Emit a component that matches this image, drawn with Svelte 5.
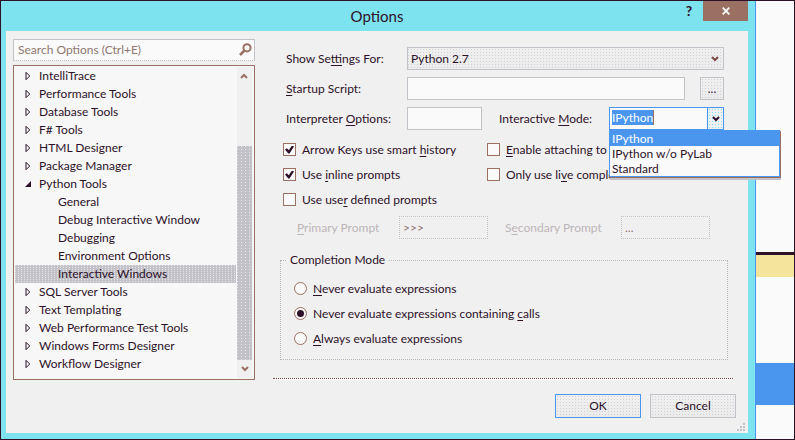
<script>
  const nodes = [
    { label: 'IntelliTrace' },
    { label: 'Performance Tools' },
    { label: 'Database Tools' },
    { label: 'F# Tools' },
    { label: 'HTML Designer' },
    { label: 'Package Manager' },
    {
      label: 'Python Tools',
      children: [
        'General',
        'Debug Interactive Window',
        'Debugging',
        'Environment Options',
        'Interactive Windows'
      ]
    },
    { label: 'SQL Server Tools' },
    { label: 'Text Templating' },
    { label: 'Web Performance Test Tools' },
    { label: 'Windows Forms Designer' },
    { label: 'Workflow Designer' }
  ];
  const modes = ['IPython', 'IPython w/o PyLab', 'Standard'];

  let page = $state('Interactive Windows');
  let mode = $state('IPython');
  let open = $state(true);
  let smartHistory = $state(true);
  let inlinePrompts = $state(true);
  let userPrompts = $state(false);
  let attach = $state(false);
  let liveOnly = $state(false);
  let completion = $state('no-calls');
  let primary = $state('>>>');
  let secondary = $state('...');

  function pick(value) {
    mode = value;
    open = false;
  }
</script>

{#snippet chevron()}
  <svg class="chevron" width="8" height="6" viewBox="0 0 8 6" aria-hidden="true">
    <path d="M1 1 L4 4 L7 1" fill="none" stroke="currentColor" stroke-width="2" />
  </svg>
{/snippet}

<div class="screen">
  <main class="dialog">
    <header>
      <h1>Options</h1>
      <div class="caption">
        <button class="help" aria-label="Help">?</button>
        <button class="close" aria-label="Close">
          <svg width="8" height="8" viewBox="0 0 8 8" aria-hidden="true">
            <path d="M0.7 0.7 L7.3 7.3 M7.3 0.7 L0.7 7.3" stroke="#fff" stroke-width="1.8" />
          </svg>
        </button>
      </div>
    </header>

    <div class="body">
      <aside>
        <div class="search">
          <input type="text" placeholder="Search Options (Ctrl+E)" aria-label="Search Options" />
          <svg width="13" height="13" viewBox="0 0 13 13" aria-hidden="true">
            <circle cx="8" cy="4.8" r="3.6" fill="none" stroke="#9a7063" stroke-width="2" />
            <path d="M5.4 7.6 L1 12" stroke="#9a7063" stroke-width="2.6" />
          </svg>
        </div>
        <div class="tree">
          <ul role="tree" aria-label="Option pages">
            {#each nodes as node}
              <li role="treeitem" aria-selected="false" aria-expanded={!!node.children}>
                <div class="node">
                  <svg width="6" height="10" viewBox="0 0 6 10" aria-hidden="true">
                    {#if node.children}
                      <path d="M6 2 L6 8 L0 8 Z" fill="#2d1129" />
                    {:else}
                      <path d="M1 1.3 L4.7 5 L1 8.7 Z" fill="none" stroke="#2d1129" />
                    {/if}
                  </svg>
                  {node.label}
                </div>
                {#if node.children}
                  <ul role="group">
                    {#each node.children as child}
                      <li role="treeitem" aria-selected={page === child}>
                        <button class="leaf" class:selected={page === child} onclick={() => (page = child)}>
                          {child}
                        </button>
                      </li>
                    {/each}
                  </ul>
                {/if}
              </li>
            {/each}
          </ul>
          <div class="scroll">
            <button class="up" aria-label="Scroll up">{@render chevron()}</button>
            <div class="track"><div class="thumb"></div></div>
            <button aria-label="Scroll down">{@render chevron()}</button>
          </div>
        </div>
      </aside>

      <form onsubmit={(e) => e.preventDefault()}>
        <div class="rows">
          <div class="row">
            <label class="name" for="settings">Show Se<u>t</u>tings For:</label>
            <div class="select">
              <select id="settings"><option>Python 2.7</option></select>
              {@render chevron()}
            </div>
          </div>
          <div class="row">
            <label class="name" for="script"><u>S</u>tartup Script:</label>
            <input class="box grow" id="script" type="text" />
            <button type="button" class="face browse" aria-label="Browse">...</button>
          </div>
          <div class="row">
            <label class="name" for="interp">Interpreter <u>O</u>ptions:</label>
            <input class="box short" id="interp" type="text" />
            <label class="mode-name" for="mode">Interactive <u>M</u>ode:</label>
            <div class="combo">
              <div class="combo-text">
                <input id="mode" type="text" role="combobox" aria-expanded={open} aria-controls="modes" size="6" bind:value={mode} />
              </div>
              <button type="button" aria-label="Show modes" onclick={() => (open = !open)}>{@render chevron()}</button>
              {#if open}
                <ul class="menu" id="modes" role="listbox">
                  {#each modes as item}
                    <li role="option" aria-selected={item === mode}>
                      <button type="button" class:current={item === mode} onclick={() => pick(item)}>{item}</button>
                    </li>
                  {/each}
                </ul>
              {/if}
            </div>
          </div>
        </div>

        <div class="checks">
          <label><input type="checkbox" bind:checked={smartHistory} /><span>Arrow Keys use smart <u>h</u>istory</span></label>
          <label><input type="checkbox" bind:checked={attach} /><span><u>E</u>nable attaching to</span></label>
          <label><input type="checkbox" bind:checked={inlinePrompts} /><span>Use <u>i</u>nline prompts</span></label>
          <label><input type="checkbox" bind:checked={liveOnly} /><span>Only use li<u>v</u>e completions</span></label>
          <label><input type="checkbox" bind:checked={userPrompts} /><span>Use use<u>r</u> defined prompts</span></label>
        </div>

        <div class="prompts">
          <label for="primary"><u>P</u>rimary Prompt</label>
          <input id="primary" type="text" disabled={!userPrompts} bind:value={primary} />
          <label for="secondary">S<u>e</u>condary Prompt</label>
          <input id="secondary" type="text" disabled={!userPrompts} bind:value={secondary} />
        </div>

        <fieldset>
          <legend>Completion Mode</legend>
          <label><input type="radio" value="never" bind:group={completion} /><span><u>N</u>ever evaluate expressions</span></label>
          <label><input type="radio" value="no-calls" bind:group={completion} /><span>Never evaluate expressions containing <u>c</u>alls</span></label>
          <label><input type="radio" value="always" bind:group={completion} /><span><u>A</u>lways evaluate expressions</span></label>
        </fieldset>

        <hr />

        <footer>
          <button type="submit" class="face primary">OK</button>
          <button type="button" class="face">Cancel</button>
        </footer>
      </form>

      <svg class="grip" width="8" height="8" viewBox="0 0 8 8" aria-hidden="true">
        <path d="M6 0h2v2h-2z M3 3h2v2h-2z M6 3h2v2h-2z M0 6h2v2h-2z M3 6h2v2h-2z M6 6h2v2h-2z" fill="#c2c2c8" />
      </svg>
    </div>
  </main>

  <div class="behind" aria-hidden="true">
    <div class="note"></div>
    <div class="bar"></div>
  </div>
</div>

<style>
  .screen {
    --ink: #2d1129;
    --cyan: #7de3ee;
    --blue: #4a96ef;
    --grey: #c2c2c8;
    --brown: #9a7063;
    --paper: #fafafa;
    --face: #f0f0f0;
    box-sizing: border-box;
    min-height: 100vh;
    display: flex;
    border: 1px solid var(--ink);
    background: var(--paper);
    color: var(--ink);
    font: 12px/18px Lato, 'Open Sans', sans-serif;
  }
  .screen :global(*) {
    box-sizing: border-box;
  }
  button, input, select {
    font: inherit;
    color: inherit;
    margin: 0;
    padding: 0;
    border: 0;
    border-radius: 0;
    background: none;
    outline: none;
  }
  ul {
    list-style: none;
    margin: 0;
    padding: 0;
  }
  u {
    text-underline-offset: 2px;
    text-decoration-skip-ink: none;
  }

  .dialog {
    flex: 1;
    display: flex;
    flex-direction: column;
    background: var(--cyan);
    border-right: 1px solid var(--blue);
    padding: 0 7px 6px 5px;
  }
  header {
    height: 30px;
    display: grid;
    grid-template-columns: 1fr auto 1fr;
    align-items: start;
  }
  h1 {
    grid-column: 2;
    margin: 0;
    font-size: 15px;
    line-height: 30px;
    font-weight: 400;
  }
  .caption {
    display: flex;
    justify-content: flex-end;
    gap: 10px;
  }
  .help {
    width: 8px;
    font-size: 14px;
    line-height: 20px;
    font-weight: 700;
  }
  .close {
    width: 45px;
    height: 20px;
    background: var(--brown);
    display: flex;
    align-items: center;
    justify-content: center;
  }

  .body {
    flex: 1;
    position: relative;
    display: flex;
    align-items: flex-start;
    gap: 18px;
    background: var(--face);
    padding: 8px 12px 15px 7px;
  }
  aside {
    width: 242px;
    flex: none;
    display: flex;
    flex-direction: column;
    gap: 4px;
  }
  .search {
    height: 22px;
    display: flex;
    align-items: center;
    gap: 4px;
    padding: 0 2px 0 4px;
    border: 1px solid var(--grey);
    border-bottom-style: dotted;
    background: var(--paper);
  }
  .search svg {
    flex: none;
    margin-bottom: 2px;
  }
  .search input {
    flex: 1;
    min-width: 0;
  }
  .search input::placeholder {
    color: #8f7770;
    opacity: 1;
  }
  .tree {
    display: flex;
    border: 1px solid var(--brown);
    background: #f7f7f7;
    height: 315px;
    padding: 1px 2px 1px 1px;
  }
  .tree > ul {
    flex: 1;
  }
  .node {
    display: flex;
    align-items: center;
    gap: 8px;
    height: 18px;
    padding-left: 10px;
  }
  .leaf {
    display: block;
    width: 100%;
    height: 18px;
    padding-left: 43px;
    text-align: left;
  }
  .selected {
    background: conic-gradient(from 270deg at 1px 1px, #e6e6e8 90deg, var(--grey) 0) 0 0 / 3px 2px;
  }
  .scroll {
    width: 15px;
    margin-left: 1px;
    display: flex;
    flex-direction: column;
    background: var(--face);
  }
  .scroll button {
    height: 18px;
    display: flex;
    align-items: center;
    justify-content: center;
    color: var(--brown);
  }
  .up {
    transform: rotate(180deg);
  }
  .track {
    flex: 1;
    display: flex;
    flex-direction: column;
    justify-content: flex-end;
  }
  .thumb {
    height: 78%;
    background: conic-gradient(from 270deg at 1px 1px, #e6e6e8 90deg, var(--grey) 0) 0 0 / 4px 3px;
  }

  form {
    flex: 1;
    min-width: 0;
    display: flex;
    flex-direction: column;
    padding-top: 8px;
  }
  .rows {
    display: flex;
    flex-direction: column;
    gap: 7px;
    padding: 0 12px 0 13px;
  }
  .row {
    display: flex;
    align-items: center;
    height: 23px;
  }
  .name {
    width: 121px;
    flex: none;
  }
  .select {
    flex: 1;
    height: 23px;
    display: grid;
    align-items: center;
    border: 1px solid var(--grey);
    background:
      conic-gradient(from 270deg at 1px 1px, #d0d0d5 90deg, transparent 0) 0 7px / 3px 3px,
      linear-gradient(#f0f0f0, #ebebeb);
    color: var(--ink);
  }
  .select > :global(*) {
    grid-area: 1 / 1;
  }
  .select select {
    width: 100%;
    height: 21px;
    padding-left: 3px;
    appearance: none;
  }
  .select :global(.chevron) {
    justify-self: end;
    margin-right: 4px;
    pointer-events: none;
    color: #7d4a45;
  }
  .box {
    height: 23px;
    padding: 0 4px;
    border: 1px solid var(--grey);
    background: var(--paper);
  }
  .grow {
    flex: 1;
    min-width: 0;
  }
  .short {
    width: 75px;
  }
  .face {
    border: 1px solid var(--grey);
    background:
      conic-gradient(from 270deg at 1px 1px, #d0d0d5 90deg, transparent 0) 1px 7px / 3px 3px,
      linear-gradient(#f0f0f0, #ebebeb);
  }
  .browse {
    width: 24px;
    height: 23px;
    margin-left: 15px;
  }
  .mode-name {
    flex: 1;
    padding-left: 17px;
    white-space: nowrap;
  }
  .combo {
    position: relative;
    width: 115px;
    height: 23px;
    display: flex;
    border: 1px solid var(--blue);
    background: var(--paper);
  }
  .combo-text {
    flex: 1;
    padding: 2px;
  }
  .combo-text input {
    display: block;
    width: 42px;
    height: 15px;
    line-height: 15px;
    background: var(--blue);
    border-right: 1px solid var(--brown);
    color: #fff;
  }
  .combo > button {
    width: 16px;
    border-left: 1px solid var(--blue);
    background: conic-gradient(from 270deg at 1px 1px, var(--cyan) 90deg, var(--face) 0) 1px 1px / 3px 3px;
    display: flex;
    align-items: center;
    justify-content: center;
  }
  .menu {
    position: absolute;
    z-index: 2;
    top: 22px;
    left: -1px;
    width: 171px;
    border: 1px solid var(--blue);
    background: var(--paper);
    box-shadow: 1px 1px 0 var(--brown), 1px 3px 0 var(--grey);
  }
  .menu button {
    display: block;
    width: 100%;
    height: 15px;
    line-height: 15px;
    padding-left: 2px;
    text-align: left;
  }
  .menu .current {
    background: var(--blue);
    color: #fff;
  }

  .checks {
    display: grid;
    grid-template-columns: 204px 1fr;
    padding: 7px 10px 0;
  }
  .checks label, fieldset label {
    display: flex;
    align-items: center;
    height: 25px;
    gap: 6px;
    white-space: nowrap;
  }
  input[type='checkbox'], input[type='radio'] {
    appearance: none;
    flex: none;
    width: 13px;
    height: 13px;
    border: 1px solid var(--brown);
    background: var(--paper);
  }
  input[type='checkbox'] {
    display: grid;
    place-items: center;
  }
  input[type='checkbox']:checked::before {
    content: '';
    width: 9px;
    height: 8px;
    background: var(--ink);
    clip-path: polygon(0 50%, 22% 35%, 42% 60%, 78% 0, 100% 12%, 50% 100%, 36% 100%);
  }
  input[type='radio'] {
    border-radius: 50%;
    display: grid;
    place-items: center;
  }
  input[type='radio']:checked::before {
    content: '';
    width: 7px;
    height: 7px;
    border-radius: 50%;
    background: var(--ink);
  }

  .prompts {
    display: grid;
    grid-template-columns: 102px 89px 133px 89px;
    align-items: center;
    padding: 4px 0 0 24px;
    color: #bdb6b9;
    white-space: nowrap;
  }
  .prompts label:nth-of-type(2) {
    padding-left: 17px;
  }
  .prompts input {
    width: 89px;
    height: 23px;
    padding-left: 3px;
    border: 1px dotted var(--grey);
    color: #8f7770;
  }

  fieldset {
    margin: 12px 8px 0 7px;
    padding: 7px 13px 8px;
    border: 1px dotted #b4b4ba;
    min-width: 0;
  }
  legend {
    margin-left: -7px;
    padding: 0 3px;
  }
  hr {
    align-self: stretch;
    margin: 18px 3px 14px 0;
    border: 0;
    border-top: 1px dotted #7d4a45;
    border-bottom: 1px solid var(--paper);
  }
  footer {
    display: flex;
    justify-content: flex-end;
    gap: 9px;
  }
  footer button {
    width: 86px;
    height: 24px;
  }
  .primary {
    border-color: var(--blue);
  }
  .grip {
    position: absolute;
    right: 3px;
    bottom: 2px;
  }

  .behind {
    width: 38px;
    flex: none;
    display: flex;
    flex-direction: column;
  }
  .note {
    margin-top: 251px;
    height: 25px;
    border-top: 3px solid var(--ink);
    background: #f5e49c;
  }
  .bar {
    margin-top: 86px;
    height: 42px;
    background: var(--blue);
  }
</style>
